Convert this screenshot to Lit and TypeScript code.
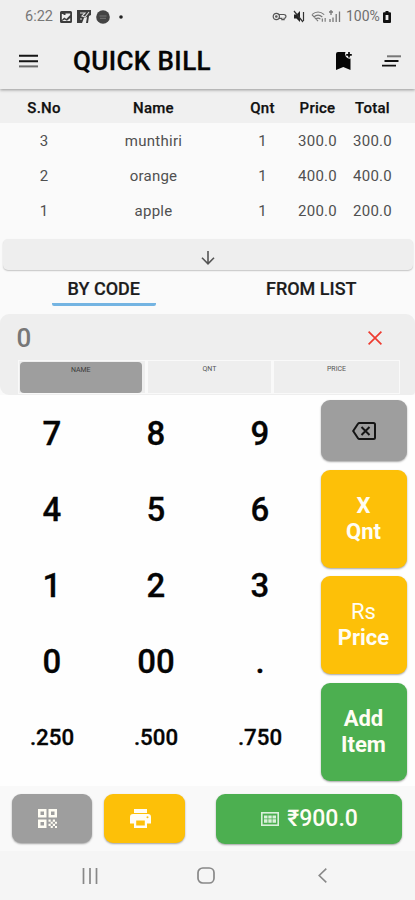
import { LitElement, html, css, svg } from "lit";
import { customElement } from "lit/decorators.js";
import { classMap } from "lit/directives/class-map.js";

const ROWS = [
  ["3", "munthiri", "1", "300.0", "300.0"],
  ["2", "orange", "1", "400.0", "400.0"],
  ["1", "apple", "1", "200.0", "200.0"],
];
const KEYS = ["7", "8", "9", "4", "5", "6", "1", "2", "3", "0", "00", ".", ".250", ".500", ".750"];

const icon = (name: string, w: number, h: number, box: string, body: unknown) =>
  html`<svg class="icon ${name}" width=${w} height=${h} viewBox=${box} fill="currentColor">${body}</svg>`;

@customElement("app-root")
export class AppRoot extends LitElement {
  static styles = css`
    :host {
      display: flex;
      flex-direction: column;
      width: 415px;
      height: 900px;
      overflow: hidden;
      background: #fafafa;
      color: #111;
      font-family: Roboto, "Noto Sans", sans-serif;
    }
    * { box-sizing: border-box; }
    .icon { display: block; flex: none; }
    .status {
      height: 32px;
      flex: none;
      display: flex;
      align-items: center;
      justify-content: space-between;
      padding: 1px 24px 0 25px;
      background: #eeeeee;
      color: #6f6f6f;
      font-size: 14.5px;
      line-height: 31px;
    }
    .group { display: flex; align-items: center; }
    .clock { width: 35px; color: #777; }
    .left { color: #3c3c3c; }
    .chart, .chat { margin-left: 5px; }
    .dot { margin-left: 5px; }
    .right { color: #555; }
    .mute { margin-left: 3px; }
    .wifi { margin-left: 4px; }
    .percent { margin-left: 5px; width: 37px; font-size: 14px; color: #6f6f6f; }
    .header {
      height: 57px;
      flex: none;
      display: flex;
      align-items: center;
      padding: 1px 14px 0 19px;
      background: #eeeeee;
      box-shadow: 0 1px 3px rgba(0, 0, 0, 0.38);
      clip-path: inset(0 0 -6px 0);
      position: relative;
      color: #050505;
    }
    .title {
      margin: 0 0 0 35px;
      flex: 1;
      font-size: 26px;
      font-weight: 500;
      line-height: 56px;
      letter-spacing: 0.4px;
      -webkit-text-stroke: 0.3px #050505;
    }
    .save { margin-right: 30px; }
    .table { flex: none; height: 150px; }
    .row {
      display: grid;
      grid-template-columns: 88px 131px 71px 55px 55px;
      height: 35px;
      align-items: center;
      text-align: center;
      font-size: 15px;
      letter-spacing: 0.25px;
      color: #505050;
    }
    .row.head {
      height: 34px;
      background: #f0f0f0;
      font-weight: 500;
      color: #111;
      padding-top: 3px;
      -webkit-text-stroke: 0.25px #111;
    }
    .row .c2 { padding-left: 16px; }
    .drawer {
      flex: none;
      height: 31px;
      margin: 0 2px 0 3px;
      border-radius: 5px;
      background: #eeeeee;
      box-shadow: 0 1px 1.5px rgba(0, 0, 0, 0.22);
      display: flex;
      align-items: center;
      justify-content: center;
      padding-top: 6px;
      color: #555;
    }
    .tabs {
      flex: none;
      height: 44px;
      display: grid;
      grid-template-columns: 1fr 1fr;
      justify-items: center;
    }
    .tab {
      width: 104px;
      height: 36px;
      border-bottom: 3px solid transparent;
      border-radius: 2px;
      font-size: 18px;
      font-weight: 500;
      line-height: 37px;
      text-align: center;
      white-space: nowrap;
      color: #1c1c1c;
      -webkit-text-stroke: 0.2px #1c1c1c;
    }
    .tab.active { border-bottom-color: #74b4e2; }
    .entry {
      flex: none;
      height: 81px;
      border-radius: 9px 9px 4px 9px;
      background: #eeeeee;
    }
    .value {
      height: 46px;
      display: flex;
      align-items: center;
      justify-content: space-between;
      padding: 1px 33px 0 16.5px;
      font-size: 26px;
      font-weight: 500;
      color: #777;
    }
    .clear { color: #ee3b30; }
    .fields {
      margin: 0 15px 0 18px;
      height: 34px;
      display: grid;
      grid-template-columns: 126px 126px 1fr;
      border: 1.5px solid #f9f9f9;
    }
    .field {
      font-size: 7px;
      line-height: 17px;
      text-align: center;
      color: #555;
      border-left: 3px solid #f9f9f9;
    }
    .field.active {
      border: 0;
      margin: 1px 3px 0.5px 0.5px;
      border-radius: 4px;
      background: #9e9e9e;
      color: #3c3c3c;
      line-height: 16px;
    }
    .pad {
      flex: none;
      height: 391px;
      display: flex;
      background: #fefefe;
    }
    .keys {
      width: 312px;
      display: grid;
      grid-template-columns: repeat(3, 1fr);
      grid-auto-rows: 75.8px;
      padding-top: 1px;
      color: #050505;
    }
    .key {
      display: grid;
      place-items: center;
      font-size: 33px;
      font-weight: 500;
      -webkit-text-stroke: 0.3px #050505;
    }
    .key.small { font-size: 22.3px; }
    .actions {
      width: 86px;
      margin-left: 8.5px;
      padding-top: 5px;
      display: flex;
      flex-direction: column;
      gap: 8.7px;
    }
    .btn {
      display: flex;
      align-items: center;
      justify-content: center;
      border-radius: 9px;
      box-shadow: 0 1px 2px rgba(0, 0, 0, 0.35);
      color: #fffdf4;
      font-size: 22px;
      font-weight: 700;
      line-height: 26px;
      text-align: center;
    }
    .actions .btn { height: 98px; }
    .actions .back { height: 61px; color: #151515; }
    .light { font-weight: 400; }
    .grey { background: #9e9e9e; }
    .amber { background: #fdc008; }
    .green { background: #4caf50; }
    .footer {
      flex: none;
      height: 65px;
      display: flex;
      padding: 8px 13px 0 11.5px;
      background: #f9f9f9;
    }
    .footer .btn { height: 49px; width: 80.5px; padding-right: 8px; }
    .footer .amber { margin-left: 12px; }
    .footer .total {
      width: 186px;
      height: 50px;
      margin: -0.5px 0 0 auto;
      padding: 0 0 0 1px;
      gap: 8px;
      font-weight: 500;
      font-size: 23px;
    }
    .nav {
      flex: 1;
      display: flex;
      align-items: center;
      background: #f5f5f5;
      color: #888;
      padding-left: 81px;
    }
    .home { margin-left: 98px; }
    .prev { margin-left: 102.5px; }
  `;

  render() {
    return html`
      <div class="status">
        <div class="group left">
          <span class="clock">6:22</span>
          ${icon("photo", 12, 12, "0 0 12 12", svg`<path fill-rule="evenodd" d="M1.5 0h9A1.5 1.5 0 0 1 12 1.500v9A1.500 1.500 0 0 1 10.500 12h-9A1.500 1.500 0 0 1 0 10.500v-9A1.500 1.500 0 0 1 1.500 0zM1.800 3v6l2.500-2.500 2 1.500L10.200 4V2.500H5.500V4H3.500V3zM2 10h8.200V7L7 9.800 4.500 8.500z"/>`)}
          ${icon("chart", 14, 13, "0 0 14 13", svg`<path d="M0 0h14v5l-2 1-1 7H9l1-6-3 1-2 5H0z"/><path d="M3 3h5L5 6l3 1 4-5M3 9h2" fill="none" stroke="#ddd" stroke-width="1.100"/>`)}
          ${icon("chat", 14, 14, "0 0 14 14", svg`<circle cx="7" cy="7" r="6.800" fill="#444"/><path d="M3.500 6h7M4 8.300h6" stroke="#777" stroke-width="1"/>`)}
          ${icon("dot", 10, 6, "0 0 10 6", svg`<circle cx="6" cy="3" r="1.800" fill="#222"/>`)}
        </div>
        <div class="group right">
          ${icon("key", 16, 11, "0 0 17 12", svg`<g fill="none" stroke="currentColor" stroke-width="1.300"><circle cx="4.500" cy="6" r="3.400"/><circle cx="4.500" cy="6" r=".8"/><path d="M7 3.800h5.500a2.300 2.300 0 0 1 2.500 2.200q0 2-2 2v1.500h-2.500V8H7"/></g>`)}
          ${icon("mute", 15, 13, "0 0 15 13", svg`<path d="M3 4.500h2.500L9 1v11L5.500 8.500H3z" fill="#222"/><path d="M3 1l9 11M12.500 2v9" stroke="#333" stroke-width="1.200"/>`)}
          ${icon("wifi", 18, 13, "0 0 19 13", svg`<g fill="none" stroke="#777" stroke-width="1.200"><path d="M2 4.500Q8.500-1 15 4.500M4 7q4.500-4 9 0M6 9.300q2.500-2.200 5 0M2 4.500l6.500 7"/><path d="M13 12V8.500M16 8v4"/></g>`)}
          ${icon("signal", 13, 13, "0 0 13 13", svg`<path d="M1 2h4M3 0v5M2 12V9M5 12V7.500M8.200 12V4M11.500 12V1.500" stroke="#777" stroke-width="1.300"/>`)}
          <span class="percent">100%</span>
          ${icon("battery", 8, 12, "0 0 8 12", svg`<path fill="#111" fill-rule="evenodd" d="M2.500 0h3v1.300H7a1 1 0 0 1 1 1V11a1 1 0 0 1-1 1H1a1 1 0 0 1-1-1V2.300a1 1 0 0 1 1-1h1.500zM2.600 4v5h2.800V4z"/>`)}
        </div>
      </div>
      <div class="header">
        ${icon("menu", 19, 14, "0 0 19 14", svg`<path d="M0 1.800h19M0 7.200h19" stroke="#151515" stroke-width="2"/><path d="M0 12.400h19" stroke="#6b6b6b" stroke-width="2"/>`)}
        <h1 class="title">QUICK BILL</h1>
        ${icon("save", 16, 18, "0 0 16 18", svg`<path d="M2 0h7.500a4.500 4.500 0 0 0 5 6.500V18L7.300 15 0 18V2a2 2 0 0 1 2-2z"/><path d="M13 0v5.600M10.200 2.800h5.600" stroke="currentColor" stroke-width="1.700"/>`)}
        ${icon("sweep", 19, 12, "0 0 19 12", svg`<path d="M5 1.300h14" stroke="#777" stroke-width="2"/><path d="M2.500 6h14M0 10.600h14" stroke="#111" stroke-width="1.900"/>`)}
      </div>
      <div class="table">
        ${this.row(["S.No", "Name", "Qnt", "Price", "Total"], true)}
        ${ROWS.map((r) => this.row(r, false))}
      </div>
      <div class="drawer">
        ${icon("down", 14, 14, "0 0 14 14", svg`<path d="M7 0v12.500M1 6.800l6 6 6-6" fill="none" stroke="currentColor" stroke-width="1.600"/>`)}
      </div>
      <div class="tabs">
        <div class="tab active">BY CODE</div>
        <div class="tab">FROM LIST</div>
      </div>
      <div class="entry">
        <div class="value">
          <span>0</span>
          ${icon("clear", 14, 14, "0 0 14 14", svg`<path d="M.6.6l12.800 12.800M13.400.6L.6 13.400" fill="none" stroke="currentColor" stroke-width="1.700"/>`)}
        </div>
        <div class="fields">
          <div class="field active">NAME</div>
          <div class="field">QNT</div>
          <div class="field">PRICE</div>
        </div>
      </div>
      <div class="pad">
        <div class="keys">
          ${KEYS.map((k) => html`<div class=${classMap({ key: true, small: k.length > 2 })}>${k}</div>`)}
        </div>
        <div class="actions">
          <div class="btn grey back">
            ${icon("erase", 24, 18, "0 0 24 18", svg`<g fill="none" stroke="currentColor" stroke-width="2"><path d="M7.500 1H21.500a1.500 1.500 0 0 1 1.500 1.500v13a1.500 1.500 0 0 1-1.500 1.500H7.500Q6.500 17 6 16.200L1.200 9 6 1.800Q6.500 1 7.500 1z"/><path d="M9.500 5l8 8M17.500 5l-8 8"/></g>`)}
          </div>
          <div class="btn amber"><span>X<br />Qnt</span></div>
          <div class="btn amber"><span><span class="light">Rs</span><br />Price</span></div>
          <div class="btn green"><span>Add<br />Item</span></div>
        </div>
      </div>
      <div class="footer">
        <div class="btn grey">
          ${icon("qr", 19, 19, "0 0 19 19", svg`<path fill-rule="evenodd" d="M0 0h8.500v8.500H0zM2.500 2.500V6H6V2.500zM10.500 0H19v8.500h-8.500zM13 2.500V6h3.500V2.500zM0 10.500h8.500V19H0zM2.500 13v3.500H6V13z"/><path d="M10.500 10.500h2.200v2.200h-2.200zM14.800 10.500H17v2.200h-2.200zM12.700 12.700h2.100v2.100h-2.100zM17 12.700h2v2.100h-2zM10.500 14.800h2.200V17h-2.200zM14.800 14.800H17V17h-2.200zM12.700 17h2.100v2h-2.100zM17 17h2v2h-2z"/>`)}
        </div>
        <div class="btn amber">
          ${icon("print", 21, 19, "0 0 21 19", svg`<path d="M4 0h13v4H4z"/><path fill-rule="evenodd" d="M3 5h15a3 3 0 0 1 3 3v6.500h-4V19H4v-4.500H0V8a3 3 0 0 1 3-3zM6.200 11.500v5h8.600v-5zM17.500 7.300a1 1 0 1 0 0 2 1 1 0 0 0 0-2z"/>`)}
        </div>
        <div class="btn green total">
          ${icon("cash", 18, 14, "0 0 18 14", svg`<rect x=".8" y=".8" width="16.400" height="12.400" fill="none" stroke="#d9f0da" stroke-width="1.600"/><path d="M3 3.500h3.500v3H3zM7.300 3.500h3.400v3H7.300zM11.500 3.500H15v3h-3.500zM3 7.200h3.500v3.500H3zM7.300 7.200h3.400v3.500H7.300zM11.500 7.200H15v3.500h-3.500z" fill="#d9f0da"/>`)}
          <span>₹900.0</span>
        </div>
      </div>
      <div class="nav">
        ${icon("recent", 18, 16, "0 0 18 16", svg`<path d="M2.500 0v16M9 0v16M15.500 0v16" stroke="currentColor" stroke-width="1.700"/>`)}
        ${icon("home", 18, 17, "0 0 18 17", svg`<rect x="1" y="1" width="16" height="15" rx="4.800" fill="none" stroke="currentColor" stroke-width="1.700"/>`)}
        ${icon("prev", 9, 15, "0 0 9 15", svg`<path d="M8.300.7L1.200 7.500l7.100 6.800" fill="none" stroke="currentColor" stroke-width="1.600"/>`)}
      </div>
    `;
  }

  private row(cells: string[], head: boolean) {
    return html`<div class=${classMap({ row: true, head })}>
      ${cells.map((c, i) => html`<span class="cell c${i}">${c}</span>`)}
    </div>`;
  }
}
